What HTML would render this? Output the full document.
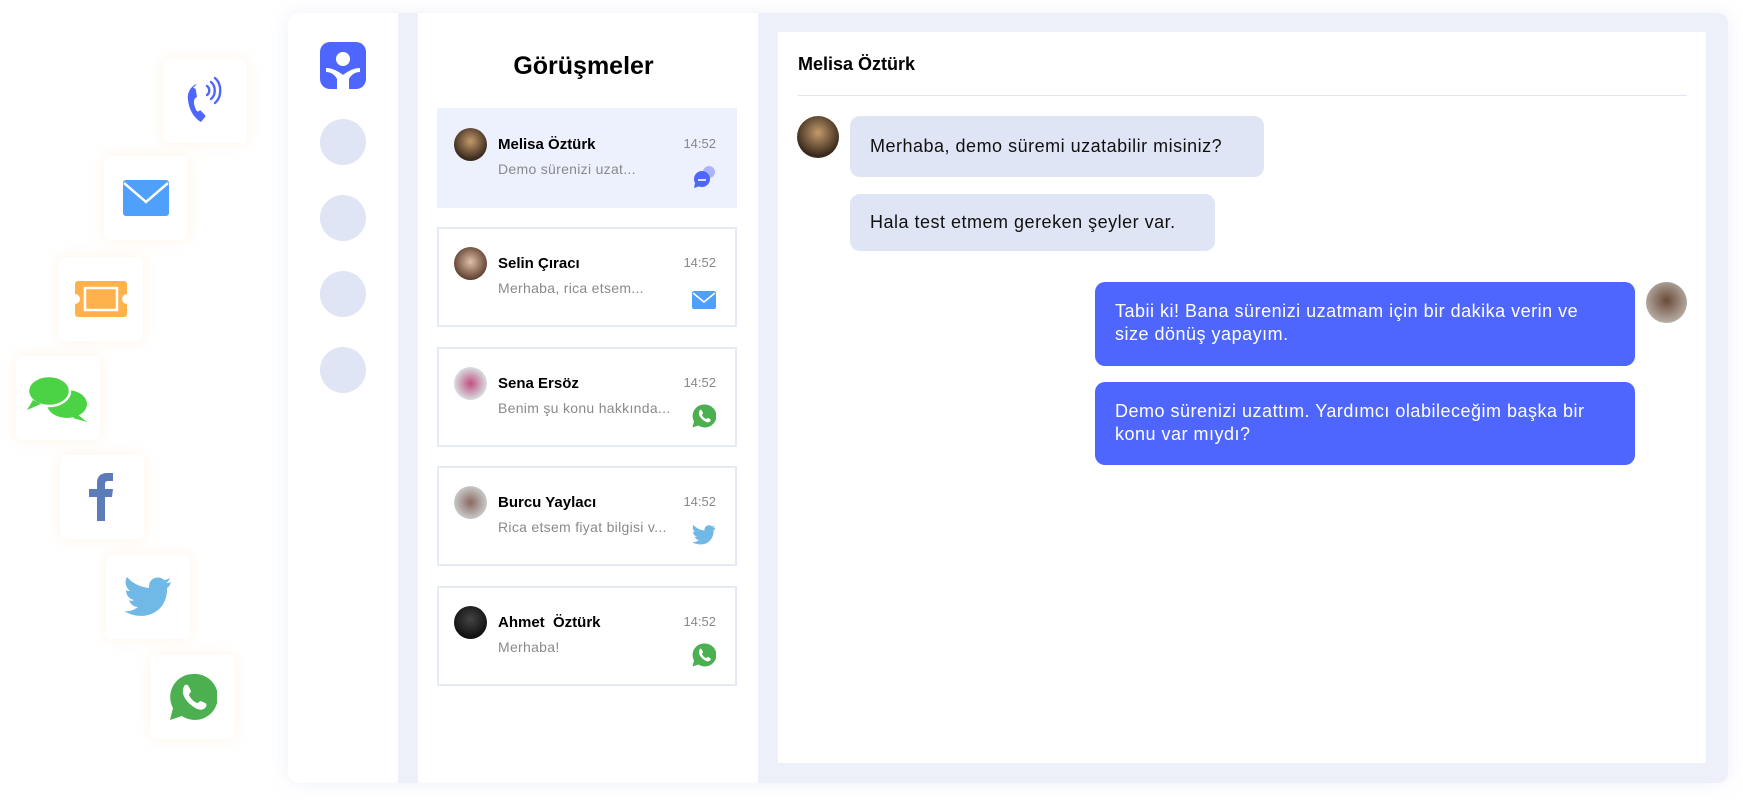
<!DOCTYPE html>
<html><head><meta charset="utf-8"><style>
*{margin:0;padding:0;box-sizing:border-box}
body{width:1743px;height:800px;background:#fff;position:relative;overflow:hidden;font-family:"Liberation Sans",sans-serif;color:#000}
.a{position:absolute}
.tile{position:absolute;width:84px;height:84px;background:#fff;border-radius:6px;box-shadow:0 0 14px rgba(255,200,140,.22);display:flex;align-items:center;justify-content:center}
.card{left:288px;top:13px;width:1440px;height:770px;background:#edf0f8;border-radius:10px;box-shadow:0 0 20px rgba(150,160,200,.15)}
.item{position:absolute;left:437px;width:300px;height:100px;border:2px solid #e6eaf3;background:#fff}
.item.sel{background:#edf0fd;border-color:#edf0fd}
.av{position:absolute;left:15px;top:18px;width:33px;height:33px;border-radius:50%}
.nm{position:absolute;left:59px;top:26px;font-weight:bold;font-size:15px}
.tm{position:absolute;right:19px;top:26px;font-size:13px;color:#888}
.pv{position:absolute;left:59px;top:51px;font-size:14px;color:#8a8a8a;letter-spacing:.3px}
.ic{position:absolute;left:253px;top:55px;width:24px;height:24px}
.circ{position:absolute;left:320px;width:46px;height:46px;border-radius:50%;background:#dfe5f4}
.bub{position:absolute;border-radius:10px;font-size:18px;line-height:23px;letter-spacing:.5px}
.in{background:#dfe5f4;color:#111}
.out{background:#4f66fe;color:#fff}
</style></head><body>

<div class="tile" style="left:163px;top:59px"><svg width="44" height="50" viewBox="0 0 44 50"><path d="M14 8c-6 2-10 8-9 16 1 10 6 18 13 22l4-5c1-1 0-2-1-3l-4-4c-2 3-4 1-5-3-2-5-1-9 2-10l-1-6c0-2-1-3-3-3z" fill="#4f66fe"/><path d="M24 10c3 2 3 7 0 9M28 6c5 4 5 13 0 17M32 2c7 6 7 19 0 25" stroke="#4f66fe" stroke-width="2.4" fill="none" stroke-linecap="round"/></svg></div>
<div class="tile" style="left:104px;top:156px"><svg width="46" height="36" viewBox="0 0 46 36"><rect width="46" height="36" rx="3" fill="#4fa0fb"/><path d="M1 3l22 19 22-19" stroke="#fff" stroke-width="2.5" fill="none"/></svg></div>
<div class="tile" style="left:59px;top:257px"><svg width="52" height="36" viewBox="0 0 52 36"><path d="M3 0h46a3 3 0 0 1 3 3v10a5 5 0 0 0 0 10v10a3 3 0 0 1-3 3H3a3 3 0 0 1-3-3V23a5 5 0 0 0 0-10V3a3 3 0 0 1 3-3z" fill="#ffb14c"/><rect x="10" y="7" width="32" height="22" fill="none" stroke="#fff" stroke-width="2.5"/></svg></div>
<div class="tile" style="left:16px;top:356px"><svg width="62" height="48" viewBox="0 0 62 48"><ellipse cx="40" cy="30" rx="20" ry="14" fill="#4cd245"/><path d="M50 40l10 8-14-4z" fill="#4cd245"/><ellipse cx="22" cy="17" rx="21" ry="15" fill="#4cd245" stroke="#fff" stroke-width="2.5"/><path d="M6 26l-6 10 14-6z" fill="#4cd245"/></svg></div>
<div class="tile" style="left:60px;top:455px"><svg width="26" height="48" viewBox="0 0 26 48"><path d="M8 48V24H0v-8h8v-6C8 3 12 0 18 0h6v8h-5c-2 0-3 1-3 3v5h8l-1 8h-7v24z" fill="#5b7cb9"/></svg></div>
<div class="tile" style="left:106px;top:555px"><svg width="48" height="40" viewBox="0 0 48 40"><path d="M47 5c-2 1-4 1-5 1 2-1 3-3 4-5-2 1-4 2-6 2-4-4-11-3-14 2-1 2-1 4-1 6C16 10 8 6 3 0 0 5 2 11 6 14c-2 0-3 0-4-1 0 5 3 9 8 10-2 1-3 1-5 0 1 4 5 7 9 7-4 3-9 5-14 4 20 12 44 1 43-23 2-1 3-3 4-6z" fill="#70b8e6"/></svg></div>
<div class="tile" style="left:151px;top:655px"><svg width="48" height="48" viewBox="0 0 48 48"><path d="M24 1a23 23 0 0 0-20 34L1 47l12-4A23 23 0 1 0 24 1z" fill="#4caf50"/><path d="M16 12c2-1 3 0 4 2l2 4c0 2-2 2-2 4 2 4 4 6 8 8 2 0 2-2 4-2l4 2c2 1 2 3 0 5-3 3-8 2-14-3-6-5-9-11-8-15 0-2 1-4 2-5z" fill="#fff"/></svg></div>

<div class="a card"></div>
<div class="a" style="left:288px;top:13px;width:110px;height:770px;background:#fff;border-radius:10px 0 0 10px"></div>
<div class="a" style="left:418px;top:13px;width:340px;height:770px;background:#fff"></div>
<div class="a" style="left:778px;top:32px;width:928px;height:731px;background:#fff"></div>

<svg class="a" style="left:320px;top:42px" width="46" height="47" viewBox="0 0 46 47"><rect width="46" height="47" rx="10" fill="#4f66fe"/><circle cx="23" cy="17" r="7" fill="#fff"/><path d="M6 30c5 0 9 3 11 7v10h12V37c2-4 6-7 11-7v-4c-6 0-12 3-17 7-5-4-11-7-17-7z" fill="#fff"/></svg>
<div class="circ" style="top:119px"></div>
<div class="circ" style="top:195px"></div>
<div class="circ" style="top:271px"></div>
<div class="circ" style="top:347px"></div>

<div class="a" style="left:413px;top:52px;width:341px;text-align:center;font-size:25px;font-weight:bold">Görüşmeler</div>

<div class="item sel" style="top:108px"><div class="av" style="background:radial-gradient(circle at 50% 40%,#c49a6c,#3a2a1c 70%)"></div><div class="nm">Melisa Öztürk</div><div class="tm">14:52</div><div class="pv">Demo sürenizi uzat...</div><svg class="ic" viewBox="0 0 24 24"><circle cx="17" cy="7" r="6" fill="#a9b4fc"/><circle cx="10" cy="14" r="8" fill="#4f66fe"/><path d="M3 18l-1 5 6-2z" fill="#4f66fe"/><path d="M6 15h8" stroke="#fff" stroke-width="1.6"/></svg></div>
<div class="item" style="top:227px"><div class="av" style="background:radial-gradient(circle at 50% 45%,#e0c0a8,#5a3a2a 75%)"></div><div class="nm">Selin Çıracı</div><div class="tm">14:52</div><div class="pv">Merhaba, rica etsem...</div><svg class="ic" viewBox="0 0 24 24" style="top:59px"><rect y="3" width="24" height="18" rx="2" fill="#4fa0fb"/><path d="M1 5l11 9 11-9" stroke="#fff" stroke-width="1.6" fill="none"/></svg></div>
<div class="item" style="top:347px"><div class="av" style="background:radial-gradient(circle at 50% 50%,#c05080,#d8dde0 70%)"></div><div class="nm">Sena Ersöz</div><div class="tm">14:52</div><div class="pv">Benim şu konu hakkında...</div><svg class="ic" viewBox="0 0 48 48"><path d="M24 1a23 23 0 0 0-20 34L1 47l12-4A23 23 0 1 0 24 1z" fill="#4caf50"/><path d="M16 12c2-1 3 0 4 2l2 4c0 2-2 2-2 4 2 4 4 6 8 8 2 0 2-2 4-2l4 2c2 1 2 3 0 5-3 3-8 2-14-3-6-5-9-11-8-15 0-2 1-4 2-5z" fill="#fff"/></svg></div>
<div class="item" style="top:466px"><div class="av" style="background:radial-gradient(circle at 50% 50%,#8a6a60,#c8c8c8 70%)"></div><div class="nm">Burcu Yaylacı</div><div class="tm">14:52</div><div class="pv">Rica etsem fiyat bilgisi v...</div><svg class="ic" viewBox="0 0 48 40"><path d="M47 5c-2 1-4 1-5 1 2-1 3-3 4-5-2 1-4 2-6 2-4-4-11-3-14 2-1 2-1 4-1 6C16 10 8 6 3 0 0 5 2 11 6 14c-2 0-3 0-4-1 0 5 3 9 8 10-2 1-3 1-5 0 1 4 5 7 9 7-4 3-9 5-14 4 20 12 44 1 43-23 2-1 3-3 4-6z" fill="#70b8e6"/></svg></div>
<div class="item" style="top:586px"><div class="av" style="background:radial-gradient(circle at 50% 40%,#444,#111 70%)"></div><div class="nm">Ahmet&nbsp; Öztürk</div><div class="tm">14:52</div><div class="pv">Merhaba!</div><svg class="ic" viewBox="0 0 48 48"><path d="M24 1a23 23 0 0 0-20 34L1 47l12-4A23 23 0 1 0 24 1z" fill="#4caf50"/><path d="M16 12c2-1 3 0 4 2l2 4c0 2-2 2-2 4 2 4 4 6 8 8 2 0 2-2 4-2l4 2c2 1 2 3 0 5-3 3-8 2-14-3-6-5-9-11-8-15 0-2 1-4 2-5z" fill="#fff"/></svg></div>

<div class="a" style="left:798px;top:54px;font-size:18px;font-weight:bold">Melisa Öztürk</div>
<div class="a" style="left:798px;top:95px;width:889px;height:1px;background:#dfe5f4"></div>
<div class="a" style="left:797px;top:116px;width:42px;height:42px;border-radius:50%;background:radial-gradient(circle at 50% 40%,#c49a6c,#3a2a1c 70%)"></div>
<div class="bub in" style="left:850px;top:116px;width:414px;height:61px;padding:19px 20px">Merhaba, demo süremi uzatabilir misiniz?</div>
<div class="bub in" style="left:850px;top:194px;width:365px;height:57px;padding:17px 20px">Hala test etmem gereken şeyler var.</div>
<div class="bub out" style="left:1095px;top:282px;width:540px;height:84px;padding:18px 20px">Tabii ki! Bana sürenizi uzatmam için bir dakika verin ve size dönüş yapayım.</div>
<div class="bub out" style="left:1095px;top:382px;width:540px;height:83px;padding:18px 20px">Demo sürenizi uzattım. Yardımcı olabileceğim başka bir konu var mıydı?</div>
<div class="a" style="left:1646px;top:282px;width:41px;height:41px;border-radius:50%;background:radial-gradient(circle at 50% 45%,#6a4a38,#b8b0a8 75%)"></div>
</body></html>
